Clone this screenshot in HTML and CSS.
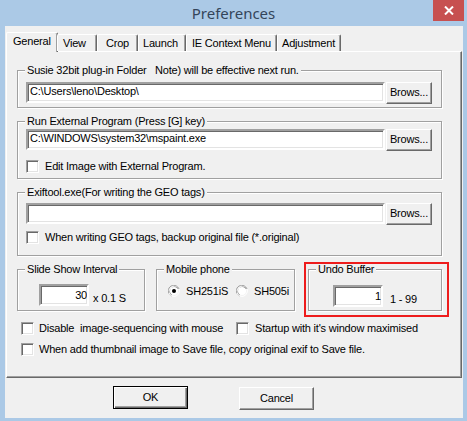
FILE: index.html
```html
<!DOCTYPE html>
<html>
<head>
<meta charset="utf-8">
<title>Preferences</title>
<link rel="stylesheet" href="styles.css">
</head>
<body>
<div class="window">
  <div class="titlebar">
    <span class="title">Preferences</span>
    <span class="close"><svg width="10" height="9" viewBox="0 0 10 9"><path d="M1 0.5 L9 8.5 M9 0.5 L1 8.5" stroke="#fff" stroke-width="2"/></svg></span>
  </div>
  <div class="client">
    <div class="tabs">
      <div class="tab active t-general">General</div>
      <div class="tab t-view">View</div>
      <div class="tab t-crop">Crop</div>
      <div class="tab t-launch">Launch</div>
      <div class="tab t-ie">IE Context Menu</div>
      <div class="tab t-adj">Adjustment</div>
    </div>
    <div class="panel">
      <div class="group g1">
        <span class="glabel">Susie 32bit plug-in Folder&nbsp;&nbsp; Note) will be effective next run.</span>
        <div class="row">
          <div class="edit wide">C:\Users\leno\Desktop\</div>
          <div class="btn browse">Brows...</div>
        </div>
      </div>
      <div class="group g2">
        <span class="glabel">Run External Program (Press [G] key)</span>
        <div class="row">
          <div class="edit wide">C:\WINDOWS\system32\mspaint.exe</div>
          <div class="btn browse">Brows...</div>
        </div>
        <div class="check in-group c1"><span class="box"></span><span>Edit Image with External Program.</span></div>
      </div>
      <div class="group g3">
        <span class="glabel">Exiftool.exe(For writing the GEO tags)</span>
        <div class="row">
          <div class="edit wide"></div>
          <div class="btn browse">Brows...</div>
        </div>
        <div class="check in-group c2"><span class="box"></span><span>When writing GEO tags, backup original file (*.original)</span></div>
      </div>
      <div class="small-groups">
        <div class="group sg slide">
          <span class="glabel">Slide Show Interval</span>
          <div class="edit num">30</div>
          <span class="unit u1">x 0.1 S</span>
        </div>
        <div class="group sg mobile">
          <span class="glabel">Mobile phone</span>
          <span class="radio"><svg width="12" height="12" viewBox="0 0 12 12"><path d="M11 4 A5.5 5.5 0 1 0 4 11" fill="none" stroke="#a0a0a0"/><path d="M10 3.5 A4.5 4.5 0 1 0 3.5 10" fill="none" stroke="#696969"/><path d="M1 8 A5.5 5.5 0 0 0 8 11 A5.5 5.5 0 0 0 11 4" fill="none" stroke="#fff"/><circle cx="6" cy="6" r="4" fill="#fff"/><circle cx="6" cy="6" r="2" fill="#000"/></svg></span>
          <span class="rlabel">SH251iS</span>
          <span class="radio rb2"><svg width="12" height="12" viewBox="0 0 12 12"><path d="M11 4 A5.5 5.5 0 1 0 4 11" fill="none" stroke="#a0a0a0"/><path d="M10 3.5 A4.5 4.5 0 1 0 3.5 10" fill="none" stroke="#696969"/><path d="M1 8 A5.5 5.5 0 0 0 8 11 A5.5 5.5 0 0 0 11 4" fill="none" stroke="#fff"/><circle cx="6" cy="6" r="4" fill="#fff"/></svg></span>
          <span class="rlabel">SH505i</span>
        </div>
        <div class="group sg undo">
          <span class="glabel">Undo Buffer</span>
          <div class="edit num">1</div>
          <span class="unit u2">1 - 99</span>
        </div>
      </div>
      <div class="check-row row1">
        <div class="check first"><span class="box"></span><span class="pre">Disable  image-sequencing with mouse</span></div>
        <div class="check second"><span class="box"></span><span>Startup with it's window maximised</span></div>
      </div>
      <div class="check-row row2">
        <div class="check"><span class="box"></span><span>When add thumbnail image to Save file, copy original exif to Save file.</span></div>
      </div>
    </div>
    <div class="buttons">
      <div class="btn dlg ok">OK</div>
      <div class="btn dlg cancel">Cancel</div>
    </div>
  </div>
</div>
</body>
</html>
```

FILE: styles.css
```css
* { box-sizing: border-box; }
html, body { margin: 0; padding: 0; }
body {
  font-family: "Liberation Sans", Arial, sans-serif;
  font-size: 11px;
  letter-spacing: -0.2px;
  color: #000;
  background: #abc9e6;
}
.window {
  width: 467px;
  height: 421px;
  background: #abc9e6;
  display: flex;
  flex-direction: column;
  padding: 0 4px 3px 5px;
}
.titlebar {
  height: 26px;
  margin: 0 -4px 0 -5px;
  position: relative;
  display: flex;
  justify-content: center;
  align-items: center;
}
.title {
  font-family: "Noto Sans", "Open Sans", sans-serif;
  font-size: 15px;
  letter-spacing: 0;
  color: #34455a;
  padding-bottom: 1px;
}
.close {
  position: absolute;
  right: 3px;
  top: 0;
  width: 31px;
  height: 21px;
  background: #c75050;
  display: flex;
  align-items: center;
  justify-content: center;
}
.close svg { display: block; }
.client {
  flex: 1;
  background: #f0f0f0;
  display: flex;
  flex-direction: column;
}
.tabs {
  display: flex;
  align-items: flex-end;
  margin-top: 6px;
  padding-left: 1px;
  position: relative;
  z-index: 2;
}
.tab {
  height: 17px;
  border-top: 1px solid #fff;
  border-left: 1px solid #fff;
  border-right: 1px solid #696969;
  box-shadow: inset -1px 0 0 #a0a0a0;
  border-radius: 2px 2px 0 0;
  padding: 2px 0 0 6px;
  line-height: 13px;
  background: #f0f0f0;
}
.tab.active {
  height: 20px;
  margin-bottom: -1px;
  padding-top: 2px;
  padding-left: 6px;
}
.t-general { width: 52px; }
.t-view { width: 40px; margin-left: -1px; padding-left: 5px; }
.t-crop { width: 41px; padding-left: 8px; }
.t-launch { width: 48px; padding-left: 4px; }
.t-ie { width: 91px; padding-left: 5px; }
.t-adj { width: 64px; padding-left: 4px; }
.panel {
  margin-left: 1px;
  width: 456px;
  height: 327px;
  border: 1px solid;
  border-color: #fff #696969 #696969 #fff;
  box-shadow: inset -1px -1px 0 #a0a0a0;
  padding-left: 10px;
  position: relative;
  z-index: 1;
}
.group {
  position: relative;
  width: 425px;
  border: 1px solid #a0a0a0;
  box-shadow: inset 1px 1px 0 #fff, 1px 1px 0 #fff;
}
.glabel {
  position: absolute;
  left: 7px;
  top: -7px;
  padding: 0 2px;
  background: #f0f0f0;
  line-height: 13px;
  white-space: nowrap;
}
.row { display: flex; gap: 1px; }
.edit {
  height: 21px;
  background: #fff;
  border: 2px solid;
  border-color: #a0a0a0 #fff #fff #a0a0a0;
  box-shadow: inset 1px 1px 0 #696969, inset -1px -1px 0 #e3e3e3;
  padding: 0 2px 0 2px;
  line-height: 15px;
  white-space: nowrap;
  overflow: hidden;
}
.wide { width: 359px; }
.btn {
  background: #f0f0f0;
  border: 1px solid;
  border-color: #fff #696969 #696969 #fff;
  box-shadow: inset -1px -1px 0 #a0a0a0;
  display: flex;
  align-items: center;
  justify-content: center;
  padding-bottom: 2px;
}
.browse { width: 46px; height: 22px; }
.g1 { height: 38px; margin-top: 18px; padding: 11px 0 0 8px; }
.g2 { height: 58px; margin-top: 13px; padding: 7px 0 0 8px; }
.g3 { height: 64px; margin-top: 13px; padding: 10px 0 0 8px; }
.check {
  display: flex;
  align-items: center;
  height: 13px;
  line-height: 13px;
  white-space: nowrap;
}
.box {
  width: 13px;
  height: 13px;
  flex: none;
  background: #fff;
  border: 1px solid;
  border-color: #a0a0a0 #fff #fff #a0a0a0;
  box-shadow: inset 1px 1px 0 #696969, inset -1px -1px 0 #e3e3e3;
  margin-right: 6px;
}
.c1 { margin-top: 9px; }
.c2 { margin-top: 6px; }
.small-groups { display: flex; margin-top: 13px; }
.sg { height: 42px; display: flex; }
.slide { width: 128px; padding: 14px 0 0 21px; }
.mobile { width: 139px; margin-left: 11px; padding: 2px 0 0 11px; align-items: center; }
.undo { width: 134px; margin-left: 13px; padding: 15px 0 0 24px; }
.undo::after {
  content: "";
  position: absolute;
  left: -5px;
  top: -8px;
  right: -8px;
  bottom: -7px;
  border: 2px solid #ee1c1c;
}
.num {
  width: 50px;
  height: 22px;
  text-align: right;
  padding: 2px 0 0 0;
  line-height: 15px;
}
.unit { line-height: 13px; align-self: flex-start; }
.u1 { margin: 8px 0 0 4px; }
.u2 { margin: 8px 0 0 7px; }
.radio { width: 12px; height: 12px; margin-right: 6px; }
.radio svg { display: block; }
.rb2 { margin-left: 8px; }
.rlabel { line-height: 13px; }
.check-row { display: flex; margin-left: 4px; }
.row1 { margin-top: 11px; }
.row2 { margin-top: 8px; }
.check.first { width: 215px; }
.check-row .box { margin-right: 5px; }
.check.second .box { margin-right: 6px; }
.pre { white-space: pre; }
.buttons {
  display: flex;
  align-items: flex-start;
  margin: 8px 0 0 108px;
}
.dlg { width: 75px; height: 23px; padding-bottom: 1px; }
.ok {
  border: 1px solid #000;
  box-shadow: inset 1px 1px 0 #fff, inset -1px -1px 0 #696969, inset -2px -2px 0 #a0a0a0;
}
.cancel { margin-left: 51px; margin-top: 1px; }
```
